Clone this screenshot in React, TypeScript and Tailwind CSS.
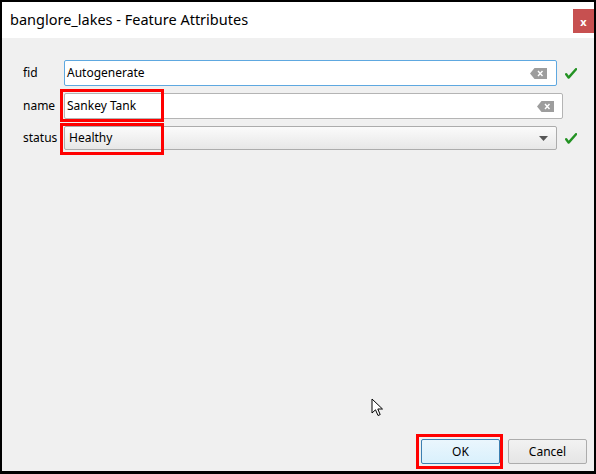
import React from "react";

const font = { fontFamily: '"Noto Sans", "Open Sans", sans-serif' };

function ClearIcon() {
  return (
    <svg width="17" height="11" viewBox="0 0 17 11">
      <path d="M0 5.5 L4.5 0 H17 V11 H4.5 Z" fill="#9d9d9d" />
      <path d="M8 3 L12.5 8 M12.5 3 L8 8" stroke="#fff" strokeWidth="1.4" />
    </svg>
  );
}

function Check() {
  return (
    <svg width="12" height="11" viewBox="0 0 12 11">
      <path d="M1.2 6.2 L3.6 9.6 L11 1.2" fill="none" stroke="#239223" strokeWidth="2.4" strokeLinecap="round" strokeLinejoin="round" />
    </svg>
  );
}

function Cursor() {
  return (
    <svg width="13" height="20" viewBox="0 0 13 20" className="absolute left-[369px] top-[396px]">
      <path d="M1 1 V15 L4.5 11.8 L7 17.5 L9.2 16.6 L6.8 11 H11.5 Z" fill="#fff" stroke="#000" strokeWidth="1" strokeLinejoin="round" />
    </svg>
  );
}

export default function App() {
  return (
    <div
      className="relative w-[596px] h-[474px] border-black border-l-2 border-r-2 border-t-2 border-b-[3px] bg-[#f0f0f0] flex flex-col text-black"
      style={font}
    >
      {/* Title bar */}
      <div className="h-[36px] bg-white flex items-start justify-between shrink-0">
        <div className="pl-[8px] pt-[7px] text-[14.5px] leading-[20px]">banglore_lakes - Feature Attributes</div>
        <div className="mt-[7px] w-[21px] h-[24px] bg-[#c75050] flex items-center justify-center text-white text-[11px] font-bold leading-none">
          x
        </div>
      </div>

      {/* Form */}
      <div className="flex flex-col pt-[22px] pl-[21px] text-[12px]">
        <div className="flex items-center h-[26px]">
          <span className="w-[41px]">fid</span>
          <div className="w-[493px] h-[26px] rounded-[2px] border border-[#5ea8e0] bg-white flex items-center pl-[2px] pr-[9px]">
            <span className="flex-1">Autogenerate</span>
            <ClearIcon />
          </div>
          <span className="ml-[8px]"><Check /></span>
        </div>

        <div className="flex items-center h-[26px] mt-[7px]">
          <span className="w-[41px]">name</span>
          <div className="relative w-[499px] h-[26px] rounded-[2px] border border-[#b4b4b4] bg-white flex items-center pl-[2px] pr-[8px]">
            <span className="flex-1">Sankey Tank</span>
            <ClearIcon />
            <div className="absolute -left-[5px] -top-[5px] w-[104px] h-[33px] border-[3px] border-[#ff0000]" />
          </div>
        </div>

        <div className="flex items-center h-[24px] mt-[7px]">
          <span className="w-[41px]">status</span>
          <div className="relative w-[493px] h-[24px] rounded-[2px] border border-[#acacac] bg-gradient-to-b from-[#fbfbfb] to-[#e7e7e7] flex items-center pl-[4px] pr-[8px]">
            <span className="flex-1">Healthy</span>
            <svg width="9" height="5" viewBox="0 0 9 5">
              <path d="M0 0 H9 L4.5 5 Z" fill="#555" />
            </svg>
            <div className="absolute -left-[5px] -top-[4px] w-[104px] h-[32px] border-[3px] border-[#ff0000]" />
          </div>
          <span className="ml-[8px]"><Check /></span>
        </div>
      </div>

      <div className="flex-1" />

      {/* Buttons */}
      <div className="flex justify-end gap-[8px] pr-[7px] pb-[7px] text-[12px]">
        <div className="relative w-[79px] h-[25px] rounded-[2px] border border-[#3c7fb1] bg-gradient-to-b from-[#eaf6fd] to-[#d9f0fc] flex items-center justify-center">
          OK
          <div className="absolute -left-[6px] -top-[6px] w-[87px] h-[35px] border-[3px] border-[#ff0000]" />
        </div>
        <div className="w-[79px] h-[25px] rounded-[2px] border border-[#acacac] bg-gradient-to-b from-[#f2f2f2] to-[#e5e5e5] flex items-center justify-center">
          Cancel
        </div>
      </div>

      <Cursor />
    </div>
  );
}
